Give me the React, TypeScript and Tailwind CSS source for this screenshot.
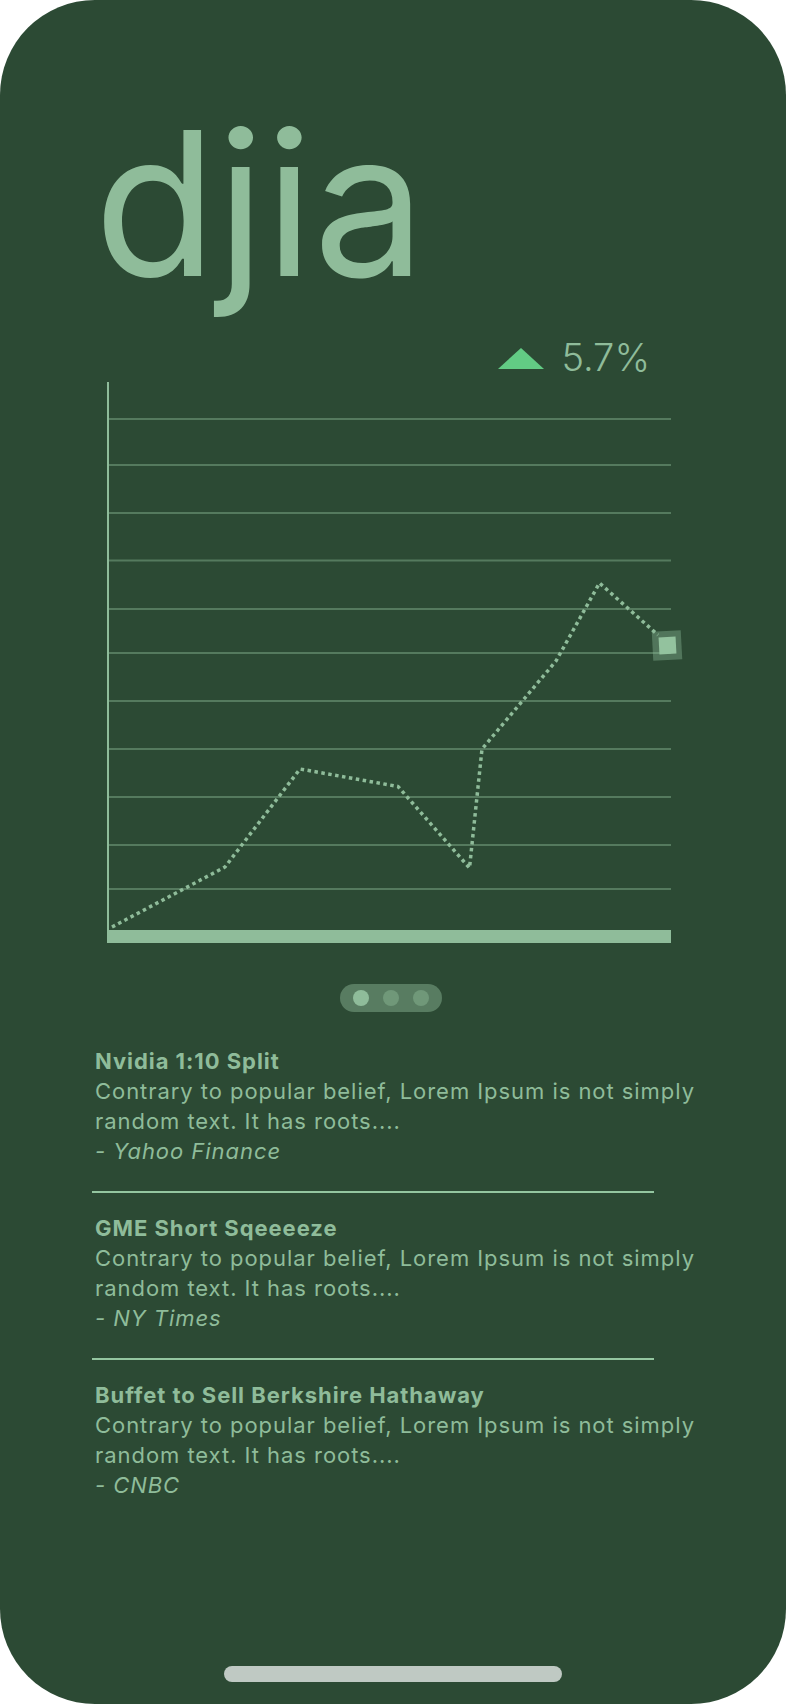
import React from "react";

const GRID_LINES = [419, 465, 513, 560.5, 609, 653, 701, 749, 797, 845, 889];

// page coords minus the chart's (100, 380) origin
const POINTS = [
  [12, 547],
  [125, 487],
  [200, 389],
  [298, 406.5],
  [369.5, 488],
  [382, 369],
  [456, 281],
  [499.5, 203],
  [558, 255],
];

const NEWS = [
  {
    title: "Nvidia 1:10 Split",
    body: "Contrary to popular belief, Lorem Ipsum is not simply random text. It has roots....",
    source: "Yahoo Finance",
  },
  {
    title: "GME Short Sqeeeeze",
    body: "Contrary to popular belief, Lorem Ipsum is not simply random text. It has roots....",
    source: "NY Times",
  },
  {
    title: "Buffet to Sell Berkshire Hathaway",
    body: "Contrary to popular belief, Lorem Ipsum is not simply random text. It has roots....",
    source: "CNBC",
  },
];

function Chart() {
  return (
    <svg width="590" height="566" viewBox="0 0 590 566" className="ml-[100px] mt-[4px] shrink-0">
      {GRID_LINES.map((y) => (
        <line key={y} x1="9" x2="571" y1={y - 380} y2={y - 380} stroke="#557a5e" strokeWidth="2" />
      ))}
      <line x1="8" x2="8" y1="2" y2="563" stroke="#8fbc9a" strokeWidth="2" />
      <rect x="7" y="550" width="564" height="13" fill="#8fbc9a" />
      <polyline
        points={POINTS.map((p) => p.join(",")).join(" ")}
        fill="none"
        stroke="#8fbc9a"
        strokeWidth="3.5"
        strokeDasharray="3.5 3.5"
      />
      <g transform="rotate(-3 567 265.5)">
        <rect x="552.5" y="251" width="29" height="29" fill="#8fbc9a" fillOpacity="0.38" />
        <rect x="559" y="257" width="17" height="17" fill="#93c29e" />
      </g>
    </svg>
  );
}

function NewsItem({ title, body, source }: { title: string; body: string; source: string }) {
  return (
    <div className="flex flex-col w-[640px] pl-[3px] text-[22px] leading-[30px] tracking-[0.95px] text-[#8fbc9a]">
      <h3 className="font-bold">{title}</h3>
      <p>{body}</p>
      <p className="italic">- {source}</p>
    </div>
  );
}

export default function App() {
  return (
    <div className="w-[786px] h-[1704px] bg-white">
      <div className="h-full rounded-[95px] bg-[#2c4a34] flex flex-col font-['Inter','Noto_Sans',sans-serif]">
        <h1 className="mt-[103px] pl-[94px] h-[200px] text-[200px] leading-none text-[#8fbc9a]">djia</h1>

        <div className="mt-[35px] flex items-center justify-end gap-[17px] pr-[136px] h-[38px]">
          <svg width="46" height="21" viewBox="0 0 46 21" className="mt-[3px]">
            <polygon points="23,0 46,21 0,21" fill="#62cb84" />
          </svg>
          <span className="text-[38px] leading-none font-light text-[#8fbc9a]">5.7%</span>
        </div>

        <Chart />

        <div className="mt-[38px] ml-[340px] w-[102px] h-[28px] px-[13px] flex items-center gap-[14px] rounded-full bg-[#587c61]">
          <span className="w-4 h-4 rounded-full bg-[#8fbc9a]" />
          <span className="w-4 h-4 rounded-full bg-[#709879]" />
          <span className="w-4 h-4 rounded-full bg-[#709879]" />
        </div>

        <div className="mt-[34px] ml-[92px] flex flex-col">
          {NEWS.map((n, i) => (
            <div key={n.title} className="flex flex-col">
              {i > 0 && <div className="w-[562px] h-[2px] bg-[#94c6a0] mt-[25px] mb-[20px]" />}
              <NewsItem {...n} />
            </div>
          ))}
        </div>

        <div className="mt-auto mb-[22px] ml-[224px] w-[338px] h-[16px] rounded-full bg-[#bfc9c3]" />
      </div>
    </div>
  );
}
